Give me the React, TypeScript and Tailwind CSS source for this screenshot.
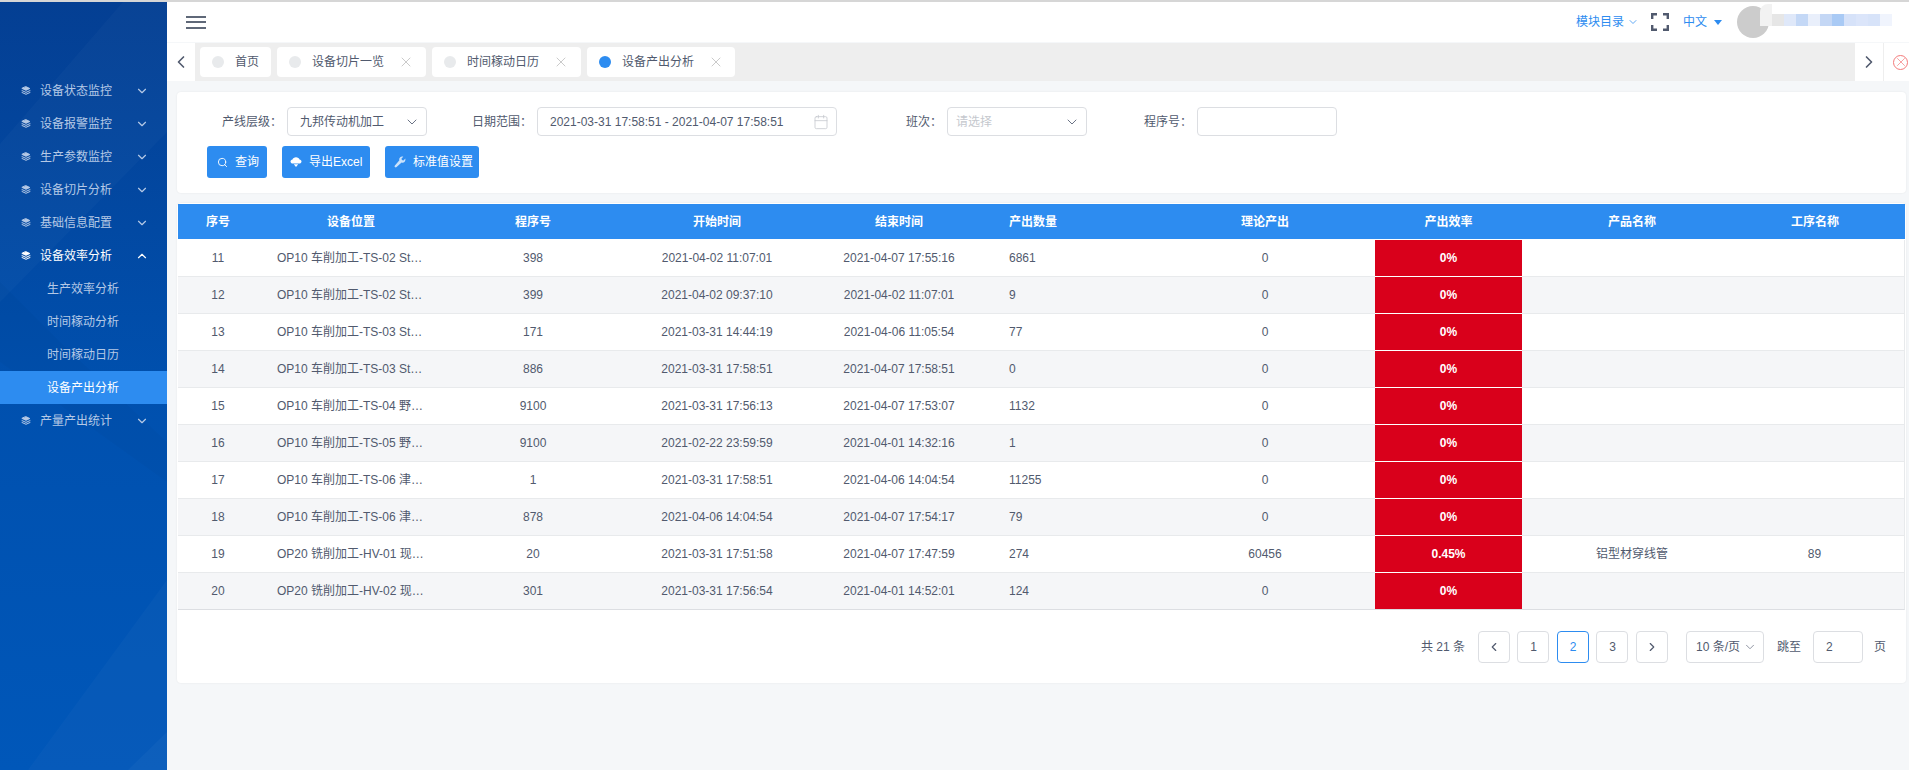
import { Calendar, ChevronDown, ChevronLeft, ChevronRight, Search, X } from "lucide-react";

const menu = ["设备状态监控", "设备报警监控", "生产参数监控", "设备切片分析", "基础信息配置"];
const subMenu = ["生产效率分析", "时间稼动分析", "时间稼动日历"];

const tabs = [
  { name: "首页", w: "w-[71px]", closable: false, active: false },
  { name: "设备切片一览", w: "w-[149px]", closable: true, active: false },
  { name: "时间稼动日历", w: "w-[149px]", closable: true, active: false },
  { name: "设备产出分析", w: "w-[148px]", closable: true, active: true },
];

const mosaic = [
  "bg-[#e6e6e6]",
  "bg-[#dfe8f9]",
  "bg-[#c4d8f6]",
  "bg-[#e9effb]",
  "bg-[#c4d7f5]",
  "bg-[#a9caf5]",
  "bg-[#d6e2f9]",
  "bg-[#dbe5fa]",
  "bg-[#d7e3f9]",
  "bg-[#f0f4fd]",
];

const rows = [
  ["11", "OP10 车削加工-TS-02 St…", "398", "2021-04-02 11:07:01", "2021-04-07 17:55:16", "6861", "0", "0%", "", ""],
  ["12", "OP10 车削加工-TS-02 St…", "399", "2021-04-02 09:37:10", "2021-04-02 11:07:01", "9", "0", "0%", "", ""],
  ["13", "OP10 车削加工-TS-03 St…", "171", "2021-03-31 14:44:19", "2021-04-06 11:05:54", "77", "0", "0%", "", ""],
  ["14", "OP10 车削加工-TS-03 St…", "886", "2021-03-31 17:58:51", "2021-04-07 17:58:51", "0", "0", "0%", "", ""],
  ["15", "OP10 车削加工-TS-04 野…", "9100", "2021-03-31 17:56:13", "2021-04-07 17:53:07", "1132", "0", "0%", "", ""],
  ["16", "OP10 车削加工-TS-05 野…", "9100", "2021-02-22 23:59:59", "2021-04-01 14:32:16", "1", "0", "0%", "", ""],
  ["17", "OP10 车削加工-TS-06 津…", "1", "2021-03-31 17:58:51", "2021-04-06 14:04:54", "11255", "0", "0%", "", ""],
  ["18", "OP10 车削加工-TS-06 津…", "878", "2021-04-06 14:04:54", "2021-04-07 17:54:17", "79", "0", "0%", "", ""],
  ["19", "OP20 铣削加工-HV-01 现…", "20", "2021-03-31 17:51:58", "2021-04-07 17:47:59", "274", "60456", "0.45%", "铝型材穿线管", "89"],
  ["20", "OP20 铣削加工-HV-02 现…", "301", "2021-03-31 17:56:54", "2021-04-01 14:52:01", "124", "0", "0%", "", ""],
];

const LayersIcon = ({ className }: { className: string }) => (
  <svg viewBox="0 0 10 9" className={className} fill="currentColor" stroke="currentColor" strokeLinejoin="round" strokeLinecap="round">
    <path d="M5 .7 8.800 2.500 5 4.300 1.200 2.500z" strokeWidth="1" />
    <path d="M1 4.600 5 6.400 9 4.600" fill="none" strokeWidth="1" />
    <path d="M1 6.500 5 8.300 9 6.500" fill="none" strokeWidth="1" />
  </svg>
);

const CloudIcon = () => (
  <svg viewBox="0 0 12 12" className="h-3 w-3" fill="white">
    <path d="M3 7.600C1.500 7.600.5 6.700.5 5.500c0-1.100.9-2 2-2.100C2.900 2.200 4.300 1.200 6 1.200s3.100 1 3.500 2.200c1.100.1 2 1 2 2.100 0 1.200-1 2.100-2.500 2.100z" />
    <path d="M3.800 8.300h4.400L6 11z" />
  </svg>
);

const WrenchIcon = () => (
  <svg viewBox="0 0 12 12" className="h-3 w-3 opacity-75" fill="white">
    <path d="M11.300 2.600 9.500 4.400 7.900 4.100 7.500 2.500 9.300.7C8 .3 6.800.6 6 1.400 5.200 2.200 5 3.300 5.400 4.300L.9 9.400c-.5.500-.5 1.200 0 1.700s1.200.5 1.700 0L7.600 6.500c1 .4 2.100.2 2.900-.6.900-.9 1.100-2.100.8-3.300z" />
  </svg>
);

const Field = ({ label, children }: { label: string; children: React.ReactNode }) => (
  <div className="flex items-center">
    <span className="mr-[5px] w-[80px] text-right">{label}</span>
    {children}
  </div>
);

const PageButton = ({ children, active }: { children: React.ReactNode; active?: boolean }) => (
  <div
    className={`flex h-8 w-8 items-center justify-center rounded border ${
      active ? "border-[#2d8cf0] text-[#2d8cf0]" : "border-[#dcdee2]"
    }`}
  >
    {children}
  </div>
);

const App = () => {
  return (
    <div className="flex h-[770px] w-[1909px] flex-col overflow-hidden bg-[#f5f7f9] font-['Liberation_Sans','Noto_Sans_CJK_SC',sans-serif] text-xs text-[#515a6e]">
      <div className="h-0.5 shrink-0 bg-[#d6d6d6]" />
      <div className="flex min-h-0 flex-1">
        <aside className="relative w-[167px] shrink-0 overflow-hidden bg-gradient-to-b from-[#043f93] via-[#0050ae] to-[#0057b9] pt-[72px] text-[#b5c9e6]">
          <svg viewBox="0 0 167 768" className="absolute inset-0 h-full w-full" preserveAspectRatio="none">
            <polygon points="123,0 167,0 167,130 0,300 0,142" fill="white" fillOpacity="0.025" />
            <polygon points="0,280 60,340 167,440 167,480 0,360" fill="black" fillOpacity="0.02" />
            <polygon points="167,578 167,768 28,768" fill="white" fillOpacity="0.025" />
            <polygon points="167,730 167,768 128,768" fill="white" fillOpacity="0.03" />
          </svg>
          <div className="relative">
            {menu.map((name) => (
              <div key={name} className="flex h-[33px] items-center pl-[21px]">
                <LayersIcon className="h-[9px] w-2.5" />
                <span className="ml-[9px] w-[72px]">{name}</span>
                <ChevronDown className="ml-[23px] h-3.5 w-3.5" strokeWidth={2} />
              </div>
            ))}
            <div className="flex h-[33px] items-center pl-[21px] text-white">
              <LayersIcon className="h-[9px] w-2.5" />
              <span className="ml-[9px] w-[72px]">设备效率分析</span>
              <ChevronDown className="ml-[23px] h-3.5 w-3.5 rotate-180" strokeWidth={2} />
            </div>
            {subMenu.map((name) => (
              <div key={name} className="flex h-[33px] items-center pl-[47px]">
                {name}
              </div>
            ))}
            <div className="flex h-[33px] items-center bg-[#2d8cf0] pl-[47px] text-white">设备产出分析</div>
            <div className="flex h-[33px] items-center pl-[21px]">
              <LayersIcon className="h-[9px] w-2.5" />
              <span className="ml-[9px] w-[72px]">产量产出统计</span>
              <ChevronDown className="ml-[23px] h-3.5 w-3.5" strokeWidth={2} />
            </div>
          </div>
        </aside>

        <main className="flex min-w-0 flex-1 flex-col">
          <header className="flex h-10 shrink-0 items-center justify-between bg-white pl-[19px] text-[#2d8cf0]">
            <div className="flex w-5 flex-col gap-[3.5px]">
              <div className="h-0.5 bg-[#5f6878]" />
              <div className="h-0.5 bg-[#5f6878]" />
              <div className="h-0.5 bg-[#5f6878]" />
            </div>
            <div className="flex items-center">
              <span>模块目录</span>
              <ChevronDown className="ml-[3px] h-3 w-3" strokeWidth={1.5} />
              <svg viewBox="0 0 18 18" className="ml-[12px] h-[18px] w-[18px] text-[#515a6e]" fill="none" stroke="currentColor" strokeWidth="2.4">
                <path d="M1.200 6V1.200H6M12 1.200h4.800V6M16.800 12v4.800H12M6 16.800H1.200V12" />
              </svg>
              <span className="ml-[14px]">中文</span>
              <div className="ml-[7px] h-0 w-0 border-x-4 border-t-[5px] border-x-transparent border-t-[#2d8cf0]" />
              <div className="relative ml-[15px] mr-[17px] h-8 w-[155px]">
                <div className="h-8 w-8 rounded-full bg-[#cccccc]" />
                <div className="absolute left-[23px] top-[-2px] h-[22px] w-3 rounded-tl-lg bg-[#f2f2f2]" />
                <div className="absolute left-[35px] top-2 flex h-3">
                  {mosaic.map((c, i) => (
                    <div key={i} className={`h-3 w-3 ${c}`} />
                  ))}
                </div>
              </div>
            </div>
          </header>

          <div className="mt-px flex h-[38px] shrink-0 items-center bg-[#eeeeee]">
            <div className="flex h-full w-7 items-center justify-center bg-white">
              <ChevronLeft className="h-5 w-5" strokeWidth={2} />
            </div>
            <div className="ml-[5px] flex flex-1 gap-1.5">
              {tabs.map((tab) => (
                <div key={tab.name} className={`flex h-[30px] items-center rounded-sm bg-white pl-3 ${tab.w}`}>
                  <div className={`h-3 w-3 rounded-full ${tab.active ? "bg-[#2d8cf0]" : "bg-[#e8eaec]"}`} />
                  <span className="ml-[11px]">{tab.name}</span>
                  {tab.closable && <X className="ml-[14px] h-4 w-4 text-[#bdbdbd]" strokeWidth={1.2} />}
                </div>
              ))}
            </div>
            <div className="flex h-full w-7 items-center justify-center bg-white">
              <ChevronRight className="h-5 w-5" strokeWidth={2} />
            </div>
            <div className="flex h-full w-[26px] items-center border-l border-[#eeeeee] bg-white pl-[9px]">
              <div className="flex h-[15px] w-[15px] shrink-0 items-center justify-center rounded-full border border-[#f47a7a]">
                <X className="h-3.5 w-3.5 shrink-0 text-[#f47a7a]" strokeWidth={1.2} />
              </div>
            </div>
          </div>

          <div className="flex-1 pl-2.5 pr-[3px] pt-[11px]">
            <section className="h-[101px] rounded bg-white pl-[25px] pt-[15px] shadow-[0_0_2px_rgba(0,0,0,0.08)]">
              <div className="flex gap-[25px]">
                <Field label="产线层级：">
                  <div className="flex h-[29px] w-[140px] items-center justify-between rounded border border-[#dcdee2] pl-3 pr-[6px]">
                    九邦传动机加工
                    <ChevronDown className="h-4 w-4 text-[#6b7385]" strokeWidth={1.5} />
                  </div>
                </Field>
                <Field label="日期范围：">
                  <div className="flex h-[29px] w-[300px] items-center justify-between rounded border border-[#dcdee2] pl-3 pr-[7px]">
                    2021-03-31 17:58:51 - 2021-04-07 17:58:51
                    <Calendar className="h-4 w-4 text-[#c5c8ce]" strokeWidth={1.2} />
                  </div>
                </Field>
                <Field label="班次：">
                  <div className="flex h-[29px] w-[140px] items-center justify-between rounded border border-[#dcdee2] pl-2 pr-[6px] text-[#c5c8ce]">
                    请选择
                    <ChevronDown className="h-4 w-4 text-[#6b7385]" strokeWidth={1.5} />
                  </div>
                </Field>
                <Field label="程序号：">
                  <div className="h-[29px] w-[140px] rounded border border-[#dcdee2]" />
                </Field>
              </div>
              <div className="ml-[5px] mt-[10px] flex gap-[15px] text-white">
                <div className="flex h-8 w-[60px] items-center rounded-[3px] bg-[#2d8cf0] pl-[10px]">
                  <Search className="h-[11px] w-[11px]" strokeWidth={2} />
                  <span className="ml-[7px]">查询</span>
                </div>
                <div className="flex h-8 w-[88px] items-center rounded-[3px] bg-[#2d8cf0] pl-[8px]">
                  <CloudIcon />
                  <span className="ml-[7px]">导出Excel</span>
                </div>
                <div className="flex h-8 w-[94px] items-center rounded-[3px] bg-[#2d8cf0] pl-[9px]">
                  <WrenchIcon />
                  <span className="ml-[7px]">标准值设置</span>
                </div>
              </div>
            </section>

            <section className="mt-2.5 h-[480px] rounded bg-white px-px pt-px shadow-[0_0_2px_rgba(0,0,0,0.08)]">
              <table className="w-full table-fixed border-separate border-spacing-0">
                <colgroup>
                  <col className="w-[80px]" />
                  <col className="w-[186px]" />
                  <col className="w-[178px]" />
                  <col className="w-[190px]" />
                  <col className="w-[174px]" />
                  <col className="w-[169px]" />
                  <col className="w-[220px]" />
                  <col className="w-[147px]" />
                  <col className="w-[220px]" />
                  <col />
                </colgroup>
                <thead className="[&_th]:border-b [&_th]:border-white">
                  <tr className="bg-[#2d8cf0] font-bold text-white">
                    <th className="h-9">序号</th>
                    <th>设备位置</th>
                    <th>程序号</th>
                    <th>开始时间</th>
                    <th>结束时间</th>
                    <th className="pl-[23px] text-left">产出数量</th>
                    <th>理论产出</th>
                    <th>产出效率</th>
                    <th>产品名称</th>
                    <th className="pr-[17px]">工序名称</th>
                  </tr>
                </thead>
                <tbody>
                  {rows.map((row, i) => {
                    const last = i === rows.length - 1;
                    const line = `border-b ${last ? "border-[#dcdee2]" : "border-[#e8eaec]"}`;
                    return (
                      <tr key={row[0]} className={`text-center ${i % 2 ? "bg-[#f5f6f8]" : "bg-white"}`}>
                        <td className={`${line} h-[37px]`}>{row[0]}</td>
                        <td className={`${line} pl-[19px] text-left`}>{row[1]}</td>
                        <td className={line}>{row[2]}</td>
                        <td className={line}>{row[3]}</td>
                        <td className={line}>{row[4]}</td>
                        <td className={`${line} pl-[23px] text-left`}>{row[5]}</td>
                        <td className={line}>{row[6]}</td>
                        <td className={`border-b bg-[#d9001b] font-bold text-white ${last ? "border-[#dcdee2]" : "border-white"}`}>{row[7]}</td>
                        <td className={line}>{row[8]}</td>
                        <td className={`${line} border-r border-r-[#e8eaec] pr-[17px]`}>{row[9]}</td>
                      </tr>
                    );
                  })}
                </tbody>
              </table>
              <div className="mt-[21px] flex items-center justify-end pr-[19px]">
                <span className="mr-[13px]">共 21 条</span>
                <div className="flex items-center gap-[7.5px]">
                  <PageButton>
                    <ChevronLeft className="h-3.5 w-3.5" strokeWidth={2} />
                  </PageButton>
                  <PageButton>1</PageButton>
                  <PageButton active>2</PageButton>
                  <PageButton>3</PageButton>
                  <PageButton>
                    <ChevronRight className="h-3.5 w-3.5" strokeWidth={2} />
                  </PageButton>
                </div>
                <div className="ml-[18px] flex h-8 w-[78px] items-center justify-between whitespace-nowrap rounded border border-[#dcdee2] pl-[9px] pr-[6px]">
                  10 条/页
                  <ChevronDown className="h-3.5 w-3.5 shrink-0 text-[#808695]" strokeWidth={1.5} />
                </div>
                <span className="ml-[13px]">跳至</span>
                <div className="ml-3 flex h-8 w-[50px] items-center rounded border border-[#dcdee2] pl-[12px]">2</div>
                <span className="ml-[11px]">页</span>
              </div>
            </section>
          </div>
        </main>
      </div>
    </div>
  );
};

export default App;
